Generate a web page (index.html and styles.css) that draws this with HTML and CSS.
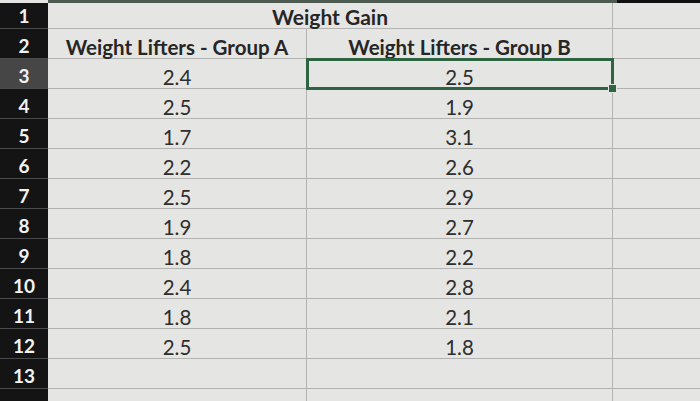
FILE: index.html
```html
<!DOCTYPE html>
<html>
<head>
<meta charset="utf-8">
<link rel="stylesheet" href="styles.css">
</head>
<body>
<div class="topband"><span class="tb-a"></span><span class="tb-b"></span></div>
<div class="sheet">
  <div class="rh">1</div><div class="cell title">Weight Gain</div><div class="cell c"></div>
  <div class="rh">2</div><div class="cell hdr">Weight Lifters - Group A</div><div class="cell hdr">Weight Lifters - Group B</div><div class="cell c"></div>
  <div class="rh sel">3</div><div class="cell">2.4</div><div class="cell active">2.5<span class="handle"></span></div><div class="cell c"></div>
  <div class="rh">4</div><div class="cell">2.5</div><div class="cell">1.9</div><div class="cell c"></div>
  <div class="rh">5</div><div class="cell">1.7</div><div class="cell">3.1</div><div class="cell c"></div>
  <div class="rh">6</div><div class="cell">2.2</div><div class="cell">2.6</div><div class="cell c"></div>
  <div class="rh">7</div><div class="cell">2.5</div><div class="cell">2.9</div><div class="cell c"></div>
  <div class="rh">8</div><div class="cell">1.9</div><div class="cell">2.7</div><div class="cell c"></div>
  <div class="rh">9</div><div class="cell">1.8</div><div class="cell">2.2</div><div class="cell c"></div>
  <div class="rh">10</div><div class="cell">2.4</div><div class="cell">2.8</div><div class="cell c"></div>
  <div class="rh">11</div><div class="cell">1.8</div><div class="cell">2.1</div><div class="cell c"></div>
  <div class="rh">12</div><div class="cell">2.5</div><div class="cell">1.8</div><div class="cell c"></div>
  <div class="rh">13</div><div class="cell"></div><div class="cell"></div><div class="cell c"></div>
  <div class="rh"></div><div class="cell"></div><div class="cell"></div><div class="cell c"></div>
</div>
</body>
</html>
```
FILE: styles.css
```css
html, body {
  margin: 0;
  padding: 0;
  width: 700px;
  height: 401px;
  overflow: hidden;
  background: #e4e4e2;
  font-family: Lato, "Liberation Sans", sans-serif;
}
.topband {
  display: flex;
  height: 3px;
  margin-left: 48px;
}
.tb-a {
  width: 569px;
  background: #4c5a50;
}
.tb-b {
  flex: 1;
  background: #111;
}
.sheet {
  display: grid;
  grid-template-columns: 48px 259px 306px 1fr;
  grid-template-rows: 26px repeat(13, 30px);
}
.rh {
  background: #141414;
  color: #f2f2f2;
  font-weight: 700;
  font-size: 19px;
  line-height: 1;
  display: flex;
  align-items: flex-end;
  justify-content: center;
  padding-bottom: 3px;
  border-bottom: 1px solid #4a4a4a;
  box-sizing: border-box;
}
.rh.sel {
  background: #464646;
}
.cell {
  background: #e5e5e3;
  color: #2e2e2e;
  font-size: 20.5px;
  line-height: 1;
  display: flex;
  align-items: flex-end;
  justify-content: center;
  padding-bottom: 1px;
  box-sizing: border-box;
  border-right: 1px solid #b2b2b0;
  border-bottom: 1px solid #b2b2b0;
}
.cell.c {
  border-right: none;
}
.title {
  grid-column: 2 / 4;
  font-weight: 700;
  font-size: 21px;
  color: #262626;
}
.hdr {
  font-weight: 700;
  color: #262626;
}
.active {
  position: relative;
  outline: 3px solid #2f6442;
  outline-offset: -2px;
}
.handle {
  position: absolute;
  right: -5px;
  bottom: -5px;
  width: 7px;
  height: 7px;
  background: #2f6442;
  border: 1px solid #e5e5e3;
}
```
